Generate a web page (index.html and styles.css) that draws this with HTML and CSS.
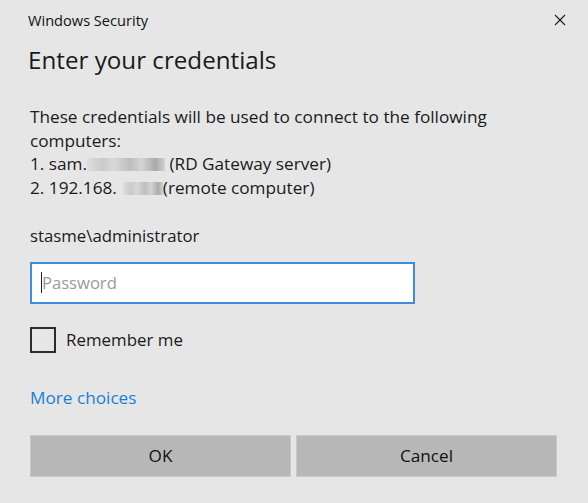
FILE: index.html
```html
<!DOCTYPE html>
<html>
<head>
<meta charset="utf-8">
<link rel="stylesheet" href="styles.css">
</head>
<body>
<div class="dialog">
  <div class="titlebar">
    <span class="app-title">Windows Security</span>
    <span class="close" aria-label="Close">
      <svg width="12" height="12" viewBox="0 0 12 12"><path d="M1 1 L11 11 M11 1 L1 11" stroke="#1a1a1a" stroke-width="1.1" fill="none"/></svg>
    </span>
  </div>
  <div class="content">
    <h1 class="heading">Enter your credentials</h1>
    <div class="message">
      <div>These credentials will be used to connect to the following</div>
      <div>computers:</div>
      <div>1. sam.<span class="blur blur-long"></span> (RD Gateway server)</div>
      <div>2. 192.168.<span class="blur blur-short"></span>(remote computer)</div>
    </div>
    <div class="user">stasme\administrator</div>
    <div class="input"><span class="caret"></span><span class="placeholder">Password</span></div>
    <label class="remember"><span class="checkbox"></span><span>Remember me</span></label>
    <a class="more">More choices</a>
    <div class="buttons">
      <button class="btn">OK</button>
      <button class="btn">Cancel</button>
    </div>
  </div>
</div>
</body>
</html>
```

FILE: styles.css
```css
html, body {
  margin: 0;
  padding: 0;
  background: #e6e6e6;
}
.dialog {
  width: 588px;
  height: 503px;
  box-sizing: border-box;
  background: #e6e6e6;
  border-top: 1px solid #efe6e1;
  font-family: "Open Sans", "Noto Sans", sans-serif;
  color: #1a1a1a;
  overflow: hidden;
}
.titlebar {
  height: 37px;
  display: flex;
  align-items: center;
  justify-content: space-between;
  padding: 0 22px 0 28px;
}
.app-title {
  font-size: 14.6px;
  color: #111;
}
.close {
  display: flex;
  width: 12px;
  height: 12px;
}
.content {
  padding: 0 31px 0 30px;
  display: flex;
  flex-direction: column;
}
.heading {
  margin: 4px 0 0 -2px;
  font-weight: 400;
  font-size: 24.2px;
  line-height: 36px;
  color: #1a1a1a;
}
.message {
  margin-top: 27px;
  font-size: 17.2px;
  line-height: 23.5px;
  white-space: nowrap;
}
.blur {
  display: inline-block;
  height: 13px;
  vertical-align: -1px;
  background: linear-gradient(90deg, #dedede 0%, #cacaca 20%, #d8d8d8 35%, #bebebe 55%, #d4d4d4 70%, #aaaaaa 88%, #d2d2d2 100%);
}
.blur-long { width: 78px; margin-left: 0; }
.blur-short { width: 40px; margin-left: 6px; }
.user {
  margin-top: 25px;
  font-size: 16.8px;
  line-height: 23px;
}
.input {
  margin-top: 14.5px;
  width: 385px;
  height: 42px;
  box-sizing: border-box;
  background: #fff;
  border: 2px solid #3d8ddb;
  display: flex;
  align-items: center;
  padding-left: 9px;
}
.caret {
  width: 1px;
  height: 21px;
  background: #222;
}
.placeholder {
  font-size: 16.6px;
  color: #9a9a9a;
}
.remember {
  margin-top: 23px;
  display: flex;
  align-items: center;
  gap: 10px;
  font-size: 16.9px;
  line-height: 26px;
}
.checkbox {
  width: 26px;
  height: 26px;
  box-sizing: border-box;
  border: 2px solid #2b2b2b;
}
.more {
  margin-top: 34px;
  color: #1a7fd4;
  font-size: 17.2px;
  line-height: 22px;
}
.buttons {
  margin-top: 26px;
  display: grid;
  grid-template-columns: 1fr 1fr;
  gap: 5px;
}
.btn {
  height: 42px;
  background: #b7b7b7;
  border: 1px solid #c8c8c8;
  font-family: "Open Sans", "Noto Sans", sans-serif;
  font-size: 17.2px;
  color: #111;
  padding: 0;
}
```
